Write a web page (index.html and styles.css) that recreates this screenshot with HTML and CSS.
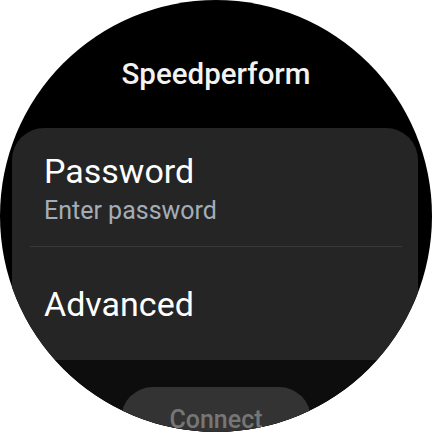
FILE: index.html
```html
<!DOCTYPE html>
<html lang="en">
<head>
    <meta charset="UTF-8">
    <meta name="viewport" content="width=device-width, initial-scale=1.0">
    <title>Speedperform</title>
    <link rel="stylesheet" href="styles.css">
</head>
<body>
    <div class="watch">
        <div class="header">
            <div class="title">Speedperform</div>
        </div>
        <div class="card">
            <div class="item">
                <div class="item-label">Password</div>
                <div class="item-sub">Enter password</div>
            </div>
            <div class="divider"></div>
            <div class="item item-advanced">
                <div class="item-label">Advanced</div>
            </div>
        </div>
        <div class="footer">
            <button class="button connect-button" disabled>Connect</button>
        </div>
    </div>
</body>
</html>
```

FILE: styles.css
```css
body, html {
    margin: 0;
    padding: 0;
    background-color: #fff;
    font-family: Roboto, 'Noto Sans', sans-serif;
}
.watch {
    width: 432px;
    height: 432px;
    border-radius: 50%;
    overflow: hidden;
    background-color: #000;
    display: flex;
    flex-direction: column;
    color: #fff;
}
.header {
    height: 128px;
    flex-shrink: 0;
    display: flex;
    justify-content: center;
    padding-top: 56px;
    box-sizing: border-box;
}
.title {
    font-size: 29.5px;
    line-height: 36px;
    font-weight: 500;
    color: #f2f2f2;
}
.card {
    margin: 0 14px 0 12px;
    height: 232px;
    flex-shrink: 0;
    background-color: #252525;
    border-radius: 32px 32px 0 0;
    display: flex;
    flex-direction: column;
}
.item {
    padding: 23px 0 0 32px;
}
.item-advanced {
    padding-top: 37px;
}
.item-label {
    font-size: 34px;
    line-height: 40px;
    color: #fff;
}
.item-sub {
    font-size: 25px;
    line-height: 32px;
    margin-top: 4px;
    color: #a3adb8;
}
.divider {
    height: 1px;
    margin: 19px 16px 0 18px;
    background-color: #393939;
}
.footer {
    flex-grow: 1;
    background-color: #0d0d0d;
    display: flex;
    justify-content: center;
    padding-top: 27px;
}
.button {
    width: 190px;
    height: 64px;
    flex-shrink: 0;
    border: none;
    border-radius: 32px;
    font-family: Roboto, sans-serif;
    font-size: 25px;
    font-weight: 500;
    padding: 0;
}
.connect-button {
    background-color: #333;
    color: #767676;
    align-self: flex-start;
}
```
